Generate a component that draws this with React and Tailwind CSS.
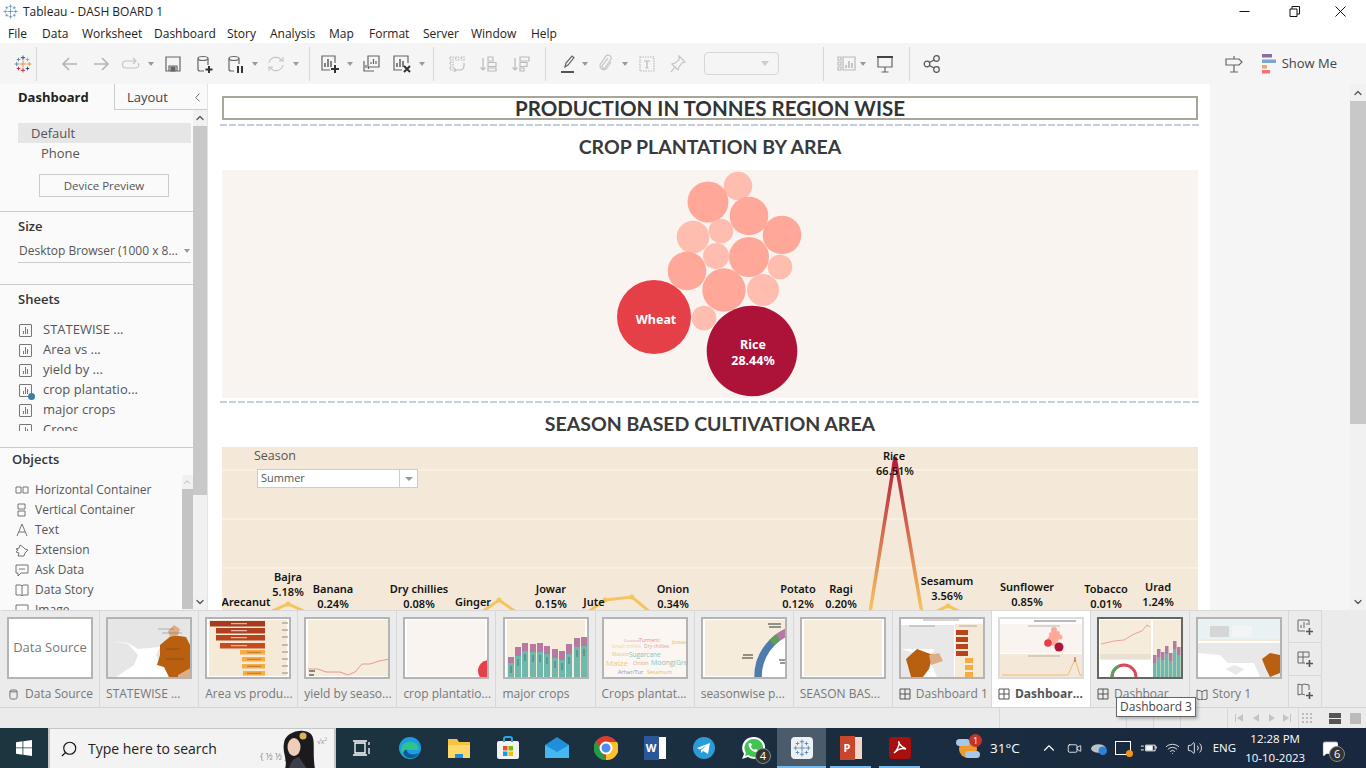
import { ChevronUp, ChevronDown, ChevronLeft, Search, Volume2, Wifi, Video, MessageSquare } from 'lucide-react'

const UI = { fontFamily: '"Open Sans", sans-serif' }

const MENU = [
    ['File', 'w-[34px]'], ['Data', 'w-[40px]'], ['Worksheet', 'w-[72px]'], ['Dashboard', 'w-[73px]'], ['Story', 'w-[43px]'],
    ['Analysis', 'w-[59px]'], ['Map', 'w-[40px]'], ['Format', 'w-[54px]'], ['Server', 'w-[48px]'], ['Window', 'w-[60px]'], ['Help', 'w-[40px]'],
]

const SHEETS = ['STATEWISE ...', 'Area vs ...', 'yield by ...', 'crop plantatio...', 'major crops', 'Crops']

const BUBBLES = [
    [738, 186, 14.3, '#ffbdb0'], [708, 202, 20.5, '#ffa899'], [749, 216, 19.3, '#ffa899'], [782, 235, 19.3, '#ffa899'],
    [693, 237, 16.3, '#ffbdb0'], [721, 231, 12.3, '#ffbdb0'], [749, 257, 20, '#ffa899'], [716, 256, 13, '#ffbdb0'],
    [780, 267, 12.3, '#ffbdb0'], [687, 271, 19.3, '#ffa899'], [724, 290, 21.7, '#ffa899'], [763, 290, 16, '#ffbdb0'],
    [704, 318, 12.3, '#ffbdb0'], [654, 317, 37, '#e53f48'], [752, 351, 45.3, '#ad1238'],
]

// x, y of the first line, then the two lines of the label
const LABELS = [
    [246, 606, 'Arecanut'], [288, 581, 'Bajra', '5.18%'], [333, 593, 'Banana', '0.24%'], [419, 593, 'Dry chillies', '0.08%'],
    [473, 606, 'Ginger'], [551, 593, 'Jowar', '0.15%'], [594, 606, 'Jute'], [673, 593, 'Onion', '0.34%'],
    [798, 593, 'Potato', '0.12%'], [841, 593, 'Ragi', '0.20%'], [947, 585, 'Sesamum', '3.56%'], [1027, 591, 'Sunflower', '0.85%'],
    [1106, 593, 'Tobacco', '0.01%'], [1158, 591, 'Urad', '1.24%'],
]

const MAJOR_BARS = [
    [3, 38, 44], [10, 28, 37], [17, 24, 32], [25, 25, 33], [32, 24, 33], [39, 27, 35], [47, 30, 39], [54, 32, 41], [61, 25, 35], [69, 19, 28], [76, 18, 27],
]

function Caret({ className = '' }) {
    return <span className={`w-0 h-0 border-x-[3px] border-x-transparent border-t-[4px] border-t-[#999] ${className}`} />
}

function Sep({ className = '' }) {
    return <span className={`w-px h-[34px] bg-[#d8d8d8] ${className}`} />
}

function Ico({ className = '', children, stroke = '#666' }) {
    return (
        <svg viewBox="0 0 20 20" fill="none" stroke={stroke} strokeWidth="1.2" className={`w-5 h-5 shrink-0 ${className}`}>
            {children}
        </svg>
    )
}

function TableauMark({ size = 20, mono }) {
    const c = mono ? ['#5b87b2', '#5b87b2', '#5b87b2', '#5b87b2', '#5b87b2'] : ['#e8862c', '#1f447e', '#c72037', '#5b879b', '#eb912b']
    const plus = (x, y, r, col) => <path d={`M${x - r} ${y}H${x + r}M${x} ${y - r}V${y + r}`} stroke={col} strokeWidth="1" />
    return (
        <svg viewBox="0 0 20 20" width={size} height={size} fill="none" className="shrink-0">
            {plus(10, 10, 4, c[0])}{plus(10, 3, 2.4, c[1])}{plus(10, 17, 2.4, c[2])}
            {plus(3, 10, 2.4, c[3])}{plus(17, 10, 2.4, c[4])}
            {plus(5, 5, 2, c[3])}{plus(15, 5, 2, c[4])}{plus(5, 15, 2, c[2])}{plus(15, 15, 2, c[1])}
        </svg>
    )
}

function Toolbar() {
    return (
        <div className="h-[41px] bg-[#f5f5f5] flex items-center shrink-0">
            <div className="w-9 pl-[14px] shrink-0"><TableauMark size={18} /></div>
            <Sep />
            <Ico className="ml-[23px]" stroke="#b5b5b5"><path d="M17 10H3M9 4l-6 6 6 6" strokeWidth="1.6" /></Ico>
            <Ico className="ml-[11px]" stroke="#b5b5b5"><path d="M3 10h14M11 4l6 6-6 6" strokeWidth="1.6" /></Ico>
            <Ico className="ml-[10px]" stroke="#c4c4c4"><path d="M14 7H5a3 3 0 0 0 0 7h10a3 3 0 0 0 2-5M12 4l3 3-3 3" /></Ico>
            <Caret className="ml-[7px]" />
            <Ico className="ml-[9px]"><path d="M3 3h14v14H3zM6 17v-5h8v5" /><path d="M8 13h4v4H8z" fill="#666" /></Ico>
            <Ico className="ml-3"><ellipse cx="8" cy="4.5" rx="5" ry="2" /><path d="M3 4.5V15a2 2 0 0 0 2 2h4M13 4.5V11" /><path d="M14 12v7M10.500 15.500h7" stroke="#333" strokeWidth="2" /></Ico>
            <Ico className="ml-[11px]"><ellipse cx="8" cy="4.5" rx="5" ry="2" /><path d="M3 4.5V15a2 2 0 0 0 2 2h3M13 4.500V10" /><path d="M12 12v7M16 12v7" stroke="#333" strokeWidth="2" /></Ico>
            <Caret className="ml-[6px] border-t-[#555]" />
            <Ico className="ml-2" stroke="#c4c4c4"><path d="M3 9a7 7 0 0 1 13-2M17 11a7 7 0 0 1-13 2M13 7h4V3M7 13H3v4" /></Ico>
            <Caret className="ml-[7px]" />
            <Sep className="ml-[10px]" />
            <Ico className="ml-[10px]"><path d="M15 9V2H2v14h8" /><path d="M5 13V9M8 13V5M11 13V7" strokeWidth="1.6" /><path d="M15 11v8M11 15h8" stroke="#333" strokeWidth="2" /></Ico>
            <Caret className="ml-[7px] border-t-[#555]" />
            <Ico className="ml-2"><path d="M7 2h11v11H7z" /><path d="M3 7v10h10" /><path d="M10 10V8M12.500 10V5M15 10V7M5 14v-3M7.500 15v-2" /></Ico>
            <Ico className="ml-[11px]"><path d="M16 9V2H2v14h8" /><path d="M5 13V9M8 13V5M11 13V7" strokeWidth="1.6" /><path d="M12 12l6 6M18 12l-6 6" stroke="#333" strokeWidth="2" /></Ico>
            <Caret className="ml-[7px] border-t-[#555]" />
            <Sep className="ml-2" />
            <Ico className="ml-[13px]" stroke="#bbb"><path d="M3 3h3v3H3zM8.500 3h3v3h-3zM14 3h3v3h-3zM3 8h3v3H3zM3 13h3v3H3z" strokeDasharray="1.500 1" /><path d="M17 9v3a4 4 0 0 1-4 4H9M7 14l2 2-2 2" /></Ico>
            <Ico className="ml-3" stroke="#bbb"><path d="M4 4v12M1.500 13.500L4 16l2.500-2.500" /><path d="M9 3h5v4H9zM9 8.500h8v4H9zM9 14h8v3H9z" /></Ico>
            <Ico className="ml-3" stroke="#bbb"><path d="M4 4v12M1.500 13.500L4 16l2.500-2.500" /><path d="M9 3h9v4H9zM9 8.500h7v4H9zM9 14h4v3H9z" /></Ico>
            <Sep className="ml-[14px]" />
            <Ico className="ml-3"><path d="M7 13l1-4 6-7 2 1.500-6 7.500z" /><path d="M3 18h13" stroke="#555" strokeWidth="2" /></Ico>
            <Caret className="ml-1 border-t-[#555]" />
            <Ico className="ml-[7px]" stroke="#c4c4c4"><path d="M13 4l-6 8a2 2 0 0 0 3 2l6-9a3 3 0 0 0-5-3l-6 9a4 4 0 0 0 6 4l5-7" /></Ico>
            <Caret className="ml-[7px]" />
            <Ico className="ml-[9px]" stroke="#bbb"><path d="M3 3h14v14H3z" strokeDasharray="1.500 1" /><path d="M7 7h6M10 7v7M8.500 14h3" /></Ico>
            <Ico className="ml-[10px]" stroke="#c4c4c4"><path d="M12 2l6 6-3 1-3 4-1 3-3-3-4 5 4-5-3-3 3-1 4-3z" /></Ico>
            <span className="ml-[17px] w-[75px] h-[23px] rounded-sm border border-[#d6d6d6] flex items-center justify-end pr-[9px]">
                <Caret className="border-t-[#ccc] border-t-[5px] border-x-[4px]" />
            </span>
            <Sep className="ml-[44px]" />
            <Ico className="ml-[13px]" stroke="#bbb"><path d="M1 3h3v3H1zM1 8h3v3H1zM1 13h3v3H1zM6 3h12v13H6z" /><path d="M9 14v-3M12 14V7M15 14v-5" strokeWidth="1.600" /></Ico>
            <Caret className="ml-[3px]" />
            <Ico className="ml-[9px]"><path d="M2 3h16" stroke="#444" strokeWidth="2" /><path d="M3 4v9h14V4M10 13v5M6.500 18h7" /></Ico>
            <Sep className="ml-[14px]" />
            <Ico className="ml-3" stroke="#555"><circle cx="14.500" cy="4.500" r="2.800" /><circle cx="5" cy="10" r="2.800" /><circle cx="14.500" cy="15.500" r="2.800" /><path d="M7.500 8.600l4.500-2.700M7.500 11.400l4.500 2.700" /></Ico>
            <Ico className="ml-auto"><path d="M2 5h13l3 3-3 3H2zM10 2v3M10 11v7M6 18h8" /></Ico>
            <svg viewBox="0 0 16 22" className="w-4 h-[22px] ml-[17px] shrink-0">
                <rect x="1" y="1" width="10" height="3.500" fill="#8a6f9e" />
                <rect x="1" y="6.500" width="14" height="3.500" fill="#7ca6cf" />
                <rect x="1" y="12" width="5" height="3.500" fill="#f3a46b" />
                <rect x="1" y="17" width="8" height="3.500" fill="#f2727f" />
            </svg>
            <span className="ml-[5px] mr-[29px] text-[13px] text-[#444]">Show Me</span>
        </div>
    )
}

function Sidebar() {
    return (
        <aside className="w-[208px] shrink-0 bg-[#fafafa] flex flex-col border-r border-[#e4e4e4]">
            <div className="h-[26px] flex shrink-0">
                <div className="w-[114px] pl-[18px] text-[13px] font-bold text-[#222] leading-[26px]">Dashboard</div>
                <div className="flex-1 border-l border-b border-[#ccc] flex items-center text-[13px] text-[#444] pt-[2px]">
                    <span className="ml-[12px]">Layout</span>
                    <ChevronLeft size={15} strokeWidth={1.2} className="ml-auto mr-[2px]" />
                </div>
            </div>
            <div className="flex flex-1 min-h-0">
                <div className="w-[193px] flex flex-col min-h-0">
                    <div className="h-[102px] border-b border-[#ccc] pt-[13px] shrink-0">
                        <div className="ml-[18px] mr-[2px] h-5 bg-[#e6e6e6] pl-[13px] text-[13px] text-[#555] leading-5">Default</div>
                        <div className="pl-[41px] mt-0 h-5 text-[13px] text-[#555] leading-5">Phone</div>
                        <button className="block ml-[39px] mt-[11px] w-[130px] h-[23px] border border-[#ccc] bg-[#fafafa] text-[11.5px] text-[#555]">Device Preview</button>
                    </div>
                    <div className="h-[73px] border-b border-[#ccc] shrink-0">
                        <div className="pl-[18px] pt-[5px] text-[13px] font-semibold text-[#333] leading-[18px]">Size</div>
                        <div className="ml-[18px] mr-[2px] mt-[5px] h-[23px] border-b border-[#ccc] flex items-center text-[12px] text-[#555] pl-px">
                            <span className="whitespace-nowrap">Desktop Browser (1000 x 8...</span>
                            <Caret className="ml-auto mr-[1px] border-t-[#666]" />
                        </div>
                    </div>
                    <div className="h-[163px] border-b border-[#ccc] overflow-hidden shrink-0">
                        <div className="pl-[18px] pt-[5px] text-[13px] font-semibold text-[#333] leading-[18px]">Sheets</div>
                        <div className="mt-[12px] h-[111px] overflow-hidden">
                            {SHEETS.map((s, i) => (
                                <div key={s} className="h-5 flex items-center pl-[19px] text-[13px] text-[#555]">
                                    <span className="relative shrink-0 w-[13px] h-[13px] border border-[#777] rounded-[1px] flex items-end justify-center gap-px pb-[2px]">
                                        <span className="w-px h-[3px] bg-[#777]" /><span className="w-px h-[7px] bg-[#777]" /><span className="w-px h-[5px] bg-[#777]" />
                                        {i === 3 && <span className="absolute -right-[4px] -bottom-[4px] w-[7px] h-[7px] rounded-full bg-[#3b7ea1]" />}
                                    </span>
                                    <span className="ml-[11px] whitespace-nowrap">{s}</span>
                                </div>
                            ))}
                        </div>
                    </div>
                    <div className="flex-1 min-h-0 overflow-hidden relative">
                        <div className="pl-[12px] pt-[2px] text-[13px] font-semibold text-[#333] leading-[18px]">Objects</div>
                        <div className="mt-[12px] pr-[11px]">
                            {[
                                ['Horizontal Container', <path key="a" d="M1 4h5v6H1zM8 4h5v6H8z" />],
                                ['Vertical Container', <path key="a" d="M3 1h7v5H3zM3 8h7v5H3z" />],
                                ['Text', <path key="a" d="M2 13L7 1l5 12M4 9h6" />],
                                ['Extension', <path key="a" d="M1 6l3-1 1-3 3 2 2 2 3 1-3 3-1 3H3l1-3-3-1 2-2z" />],
                                ['Ask Data', <path key="a" d="M1 2h12v8H6l-3 3v-3H1zM4 6h6" />],
                                ['Data Story', <path key="a" d="M1 2h5l1 1 1-1h5v10H8l-1 1-1-1H1zM7 3v9" />],
                                ['Image', <path key="a" d="M1 2h12v10H1zM3 10l3-3 4 3" />],
                            ].map(([label, d]) => (
                                <div key={label} className="h-5 flex items-center pl-[15px] text-[12px] text-[#555] whitespace-nowrap">
                                    <svg viewBox="0 0 14 14" fill="none" stroke="#666" strokeWidth="0.9" className="w-[14px] h-[14px] shrink-0">{d}</svg>
                                    <span className="ml-[6px]">{label}</span>
                                </div>
                            ))}
                        </div>
                        <div className="absolute right-0 top-[27px] bottom-0 w-[11px] bg-[#f1f1f1]">
                            <ChevronUp size={10} className="text-[#aaa] mt-[2px]" />
                            <div className="mt-[2px] h-[120px] bg-[#c4c4c4]" />
                        </div>
                    </div>
                </div>
                <div className="w-[14px] bg-[#f1f1f1] flex flex-col items-center relative">
                    <ChevronUp size={12} strokeWidth={2.5} className="text-[#555] mt-[2px] shrink-0" />
                    <div className="w-full h-[369px] mt-[2px] bg-[#c8c8c8]" />
                    <ChevronDown size={12} strokeWidth={2.5} className="text-[#555] mt-auto mb-[2px] shrink-0" />
                </div>
            </div>
        </aside>
    )
}

function Dash() {
    return <div className="ml-[12px] mr-[10px] h-[2px] bg-[repeating-linear-gradient(90deg,#c3cfe0_0,#c3cfe0_7px,transparent_7px,transparent_9px)]" />
}

const headingFont = { fontFamily: 'Lato, sans-serif' }

function Canvas() {
    return (
        <div className="w-[1002px] shrink-0 bg-white overflow-hidden">
            <div className="h-[12px]" />
            <div className="ml-[14px] mr-[12px] h-[24px] border-[2px] border-[#a8a698] flex items-center justify-center text-[20.500px] font-bold text-[#333] whitespace-nowrap" style={headingFont}>
                PRODUCTION IN TONNES REGION WISE
            </div>
            <div className="h-[4px]" />
            <Dash />
            <div className="ml-[14px] mr-[12px] h-[44px] pb-[2px] flex items-center justify-center text-[19.500px] font-bold text-[#3a3a3a]" style={headingFont}>CROP PLANTATION BY AREA</div>
            <div className="ml-[14px] mr-[12px] h-[228px] bg-[#f9f4f0]">
                <svg viewBox="222 170 976 228" className="w-full h-full block">
                    {BUBBLES.map(([cx, cy, r, fill]) => <circle key={`${cx}-${cy}`} cx={cx} cy={cy} r={r} fill={fill} />)}
                    <g fill="#fff" fontSize="12.500" fontWeight="700" textAnchor="middle" style={{ fontFamily: '"Noto Sans", sans-serif' }}>
                        <text x="656" y="324">Wheat</text>
                        <text x="753" y="349">Rice</text>
                        <text x="753" y="365">28.44%</text>
                    </g>
                </svg>
            </div>
            <div className="h-[3px]" />
            <Dash />
            <div className="ml-[14px] mr-[12px] h-[44px] pb-[2px] flex items-center justify-center text-[19.500px] font-bold text-[#3a3a3a]" style={headingFont}>SEASON BASED CULTIVATION AREA</div>
            <div className="ml-[14px] mr-[12px] h-[163px] bg-[#f4e9d8] relative overflow-hidden">
                <svg viewBox="222 447 976 163" className="w-full h-full block">
                    <defs>
                        <linearGradient id="line" gradientUnits="userSpaceOnUse" x1="0" y1="457" x2="0" y2="610">
                            <stop offset="0" stopColor="#b3173d" />
                            <stop offset="1" stopColor="#f6c45f" />
                        </linearGradient>
                    </defs>
                    <path d="M222 470H1198M222 519H1198M222 568H1198" stroke="#fbf6ee" strokeWidth="1" />
                    <g fill="none" stroke="url(#line)" strokeWidth="3.500">
                        <path d="M868 625L895 457L924 625" />
                    </g>
                    <g fill="none" stroke="#f6c45f" strokeWidth="3">
                        <path d="M270 612L288 604L306 612M482 612L499 600L516 612M935 612L948 606L961 612M588 612L605 600L632 597L650 612" />
                    </g>
                    <g fill="#f6c45f"><circle cx="288" cy="604" r="2.500" /><circle cx="499" cy="600" r="2.500" /><circle cx="605" cy="600" r="2.500" /><circle cx="632" cy="597" r="2.500" /><circle cx="948" cy="606" r="2.500" /></g>
                    <g fontSize="11" fontWeight="600" fill="#111" textAnchor="middle" style={{ fontFamily: '"Noto Sans", sans-serif' }}>
                        {LABELS.map(([x, y, a, b]) => (
                            <text key={a} x={x} y={y}>
                                <tspan x={x}>{a}</tspan>
                                {b && <tspan x={x} dy="15">{b}</tspan>}
                            </text>
                        ))}
                        <text x="894" y="460">Rice</text>
                        <text x="895" y="475">66.51%</text>
                    </g>
                </svg>
                <div className="absolute left-[32px] top-0 text-[12.500px] text-[#555]">Season</div>
                <div className="absolute left-[35px] top-[22px] w-[161px] h-[19px] bg-white border border-[#ccc] flex items-center text-[11px] text-[#555]">
                    <span className="pl-[3px] flex-1">Summer</span>
                    <span className="w-[18px] h-full border-l border-[#ccc] flex items-center justify-center"><Caret className="border-t-[#555] border-x-[4px]" /></span>
                </div>
            </div>
        </div>
    )
}

function Thumb({ children, active, hover }) {
    return (
        <div className={`w-[86px] h-[62px] mx-auto border-2 overflow-hidden shrink-0 bg-white ${hover ? 'border-[#666]' : active ? 'border-[#dcdcdc]' : 'border-[#b4b4b4]'}`}>
            <svg viewBox="0 0 82 58" className="w-full h-full block">{children}</svg>
        </div>
    )
}

const MAP_ORANGE = '#b85f10'

function TabStrip() {
    const tabs = [
        { label: 'Data Source', icon: 'db', art: <text x="41" y="33" fontSize="13" textAnchor="middle" fill="#777">Data Source</text> },
        { label: 'STATEWISE ...', art: (<>
            <rect width="82" height="58" fill="#e6e6e6" />
            <path d="M4 22L20 25L30 36L26 46L8 58H60V46L52 44L48 36L52 28L30 30L20 24Z" fill="#fff" />
            <path d="M52 26L64 16L78 18L84 30L84 48L72 60L62 60L56 48L49 46L52 36Z" fill={MAP_ORANGE} />
            <path d="M60 12L66 6L72 10L70 16L62 18Z" fill="#dcae86" /><path d="M70 56L84 48V60H70Z" fill="#dcae86" />
            <path d="M50 10L66 10M54 14L74 14M58 30L72 30M58 40L76 40" stroke="#333" strokeWidth="0.500" opacity="0.600" />
        </>) },
        { label: 'Area vs produ...', art: (<>
            <rect x="2" y="1" width="78" height="56" fill="#f5e9d8" />
            {[[3, 55, '#a63a1e', 2], [9, 49, '#b23f1c', 9], [9, 49, '#b8441c', 16], [13, 45, '#c74c1d', 24]].map(([x, w, c, y]) => <rect key={y} x={x} y={y} width={w} height="5.500" fill={c} />)}
            {[[33, 25, 31], [35, 23, 38], [35, 23, 45], [36, 22, 52]].map(([x, w, y]) => <rect key={y} x={x} y={y} width={w} height="4.500" fill="#f7ab42" />)}
            {[2, 9, 16, 24].map((y) => <path key={y} d={`M24 ${y + 2.700}H40`} stroke="#fff" strokeWidth="1" opacity="0.800" />)}
            {[31, 38, 45, 52].map((y) => <path key={y} d={`M40 ${y + 2.300}H54`} stroke="#7a5a2a" strokeWidth="1" opacity="0.600" />)}
            {[3, 10, 17, 25, 32, 39, 46, 53].map((y) => <path key={y} d={`M75 ${y + 1}H81`} stroke="#888" strokeWidth="1" />)}
        </>) },
        { label: 'yield by seaso...', art: (<>
            <rect x="2" y="1" width="80" height="56" fill="#f5ecdc" />
            <path d="M2 50L12 50L20 53L34 53L42 56L49 53L56 45L64 45L73 42L84 40" fill="none" stroke="#e68f88" strokeWidth="0.900" />
            <path d="M3 52H9M3 56H8" stroke="#222" strokeWidth="1.200" />
        </>) },
        { label: 'crop plantatio...', art: (<><rect x="2" y="1" width="78" height="56" fill="#f9f4f0" /><circle cx="84" cy="52" r="11" fill="#e53f48" /></>) },
        { label: 'major crops', art: (<>
            <rect x="2" y="1" width="78" height="56" fill="#f5ecdc" />
            {MAJOR_BARS.map(([x, top, mid]) => (
                <g key={x}>
                    <rect x={x} y={top} width="6" height={mid - top} fill="#b679a2" />
                    <rect x={x} y={mid} width="6" height={58 - mid} fill="#70b8ac" />
                    <path d={`M${x + 3} ${mid + 3}V${mid + 10}`} stroke="#2f4f4a" strokeWidth="1" opacity="0.600" />
                </g>
            ))}
        </>) },
        { label: 'Crops plantat...', art: (<>
            <rect width="82" height="58" fill="#fbf6f2" />
            <g fontSize="5"><text x="20" y="23" fill="#e89a9a" fontSize="4">Coconut</text><text x="35" y="23" fill="#e88a8a" fontSize="5">Turmeric</text><text x="8" y="29" fill="#f0d88c" fontSize="5">Small millets</text><text x="40" y="29" fill="#e0a0a0" fontSize="5">Dry chillies</text><text x="68" y="25" fill="#e8c060" fontSize="6">Jowar</text><text x="8" y="37" fill="#e8c88a">Masoor</text><text x="25" y="38" fill="#8cc4b4" fontSize="6.500">Sugarcane</text></g>
            <text x="2" y="47" fontSize="8" fill="#f0c878">Maize</text><text x="47" y="46" fontSize="7" fill="#8cc4b4">Moong(Gree</text><text x="29" y="46" fontSize="5.500" fill="#e8a888">Onion</text>
            <text x="14" y="55" fontSize="5.500" fill="#7b9cc0">Arhar/Tur</text><text x="43" y="55" fontSize="5.500" fill="#e8c060">Sesamum</text>
        </>) },
        { label: 'seasonwise p...', art: (<>
            <rect x="2" y="1" width="80" height="56" fill="#f5ecdc" />
            <circle cx="104" cy="58" r="49" fill="#fff" stroke="#4f7cad" strokeWidth="7.500" />
            <path d="M69 23.700A49 49 0 0 1 75 18.500" fill="none" stroke="#5ba15b" strokeWidth="7.500" />
            <path d="M75 18.500A49 49 0 0 1 88 11.700" fill="none" stroke="#b679a2" strokeWidth="7.500" />
            <path d="M40 36H50M39 39H50M65 5H78M66 8H78M76 41H82M77 44H82" stroke="#333" strokeWidth="1" />
        </>) },
        { label: 'SEASON BAS...', art: <rect x="2" y="1" width="78" height="56" fill="#f5ecdc" /> },
        { label: 'Dashboard 1', icon: 'grid', art: (<>
            <rect width="82" height="58" fill="#fff" /><rect y="6" width="53" height="52" fill="#e8e8e8" /><rect x="54" y="5" width="28" height="53" fill="#f5e9d8" />
            <path d="M0 30L14 34L6 46L16 58H36L30 44L24 42L34 30H16Z" fill="#fff" />
            <path d="M5 40L16 30L32 36L28 50L22 58H10Z" fill={MAP_ORANGE} />
            <path d="M28 36L38 34L42 42L30 46Z" fill="#dcae86" />
            <path d="M22 1H58M8 7H34M58 7H76" stroke="#999" strokeWidth="0.800" />
            {[11, 18, 25, 32].map((y) => <rect key={y} x="55" y={y} width="12" height="5" fill="#b8441c" />)}{[39, 46, 53].map((y) => <rect key={y} x="64" y={y} width="8" height="5" fill="#f7ab42" />)}
        </>) },
        { label: 'Dashboar...', icon: 'grid', active: true, art: (<>
            <rect width="82" height="58" fill="#fff" /><rect y="5" width="82" height="29" fill="#f9f4f0" /><rect y="35" width="82" height="23" fill="#f4e9d8" />
            <path d="M34 2H76" stroke="#777" strokeWidth="1" /><path d="M28 7H60M28 37H60" stroke="#999" strokeWidth="0.700" />
            {[[54, 11, 3], [57, 15, 3], [52, 16, 3], [55, 20, 3.500], [60, 18, 2.500], [50, 20, 2.500], [54, 24, 3]].map(([x, y, r]) => <circle key={`${x}${y}`} cx={x} cy={y} r={r} fill="#ffa899" />)}
            <circle cx="48" cy="24" r="3.800" fill="#e53f48" /><circle cx="59" cy="28" r="4.500" fill="#ad1238" />
            <path d="M2 56H68L75 40L80 56H82" fill="none" stroke="#eab060" strokeWidth="0.800" />
            <path d="M75 38L75 43" stroke="#c0435a" strokeWidth="1" />
        </>) },
        { label: 'Dashboar', icon: 'grid', hover: true, art: (<>
            <rect width="82" height="58" fill="#fff" /><rect x="1" y="1" width="51" height="40" fill="#f5ecdc" /><rect x="54" y="1" width="28" height="57" fill="#f5ecdc" />
            <rect x="1" y="35" width="51" height="5" fill="#e8e0d0" />
            <path d="M2 25L15 22L25 21L35 15L43 12L48 6L51 8" fill="none" stroke="#e68f88" strokeWidth="0.800" />
            <path d="M13 58A12 12 0 0 1 37 58" fill="none" stroke="#d84a5a" strokeWidth="3" />
            <path d="M13 58A12 12 0 0 1 20 47" fill="none" stroke="#5ba15b" strokeWidth="3" />
            {[54, 58, 62, 66, 70, 74, 78].map((x, i) => {
                const top = [36, 30, 33, 27, 34, 22, 28][i]
                return <g key={x}><rect x={x} y={top} width="3.500" height="8" fill="#b679a2" /><rect x={x} y={top + 8} width="3.500" height={50 - top} fill="#70b8ac" /></g>
            })}
        </>) },
        { label: 'Story 1', icon: 'book', art: (<>
            <rect width="82" height="58" fill="#fff" /><rect width="82" height="20" fill="#e8f2f2" /><rect x="12" y="7" width="19" height="11" fill="#d6d6d6" /><rect x="34" y="7" width="20" height="11" fill="#f1f5f5" />
            <rect y="20" width="82" height="2" fill="#f5e9d8" />
            <path d="M0 24H82V58H62L56 44L30 44L22 36L0 34Z" fill="#e8e8e8" />
            <path d="M28 50L36 46L46 50L38 56Z" fill="#e8e8e8" />
            <path d="M64 40L72 34L82 36V54L72 58L68 50Z" fill={MAP_ORANGE} />
        </>) },
    ]
    return (
        <div className="h-[98px] bg-[#ebebeb] border-b border-[#d4d4d4] flex shrink-0 pl-px">
            {tabs.map((t) => (
                <div key={t.label} className={`w-[99.100px] shrink-0 border-r border-t border-[#d8d8d8] pt-[6px] ${t.active ? 'bg-white' : ''}`}>
                    <Thumb active={t.active} hover={t.hover}>{t.art}</Thumb>
                    <div className={`h-[30px] flex items-center px-[6px] text-[12px] whitespace-nowrap overflow-hidden ${t.active ? 'font-bold text-[#555]' : 'text-[#777]'}`}>
                        {t.icon === 'db' && <svg viewBox="0 0 10 12" fill="none" stroke="#666" className="w-[9px] h-[11px] mr-[7px] ml-[2px] shrink-0"><rect x="1" y="1" width="8" height="10" rx="2" /><path d="M1 3h8" /></svg>}
                        {t.icon === 'grid' && <svg viewBox="0 0 12 12" fill="none" stroke="#555" className="w-[12px] h-[12px] mr-[5px] shrink-0"><path d="M1 1h10v10H1zM6 1v10M1 6h10" /></svg>}
                        {t.icon === 'book' && <svg viewBox="0 0 12 12" fill="none" stroke="#666" className="w-[12px] h-[12px] mr-[4px] shrink-0"><path d="M1 2l4 1 1 1 1-1 4-1v9l-4 1-1-1-1 1-4-1zM6 4v7" /></svg>}
                        <span>{t.label}</span>
                    </div>
                </div>
            ))}
            <div className="w-[33px] shrink-0 flex flex-col border-r border-t border-[#d8d8d8]">
                {[
                    <path key="a" d="M13 7V2H2v11h7M5 10V7M8 10V4M11 7V5" />,
                    <path key="a" d="M13 7V2H2v11h7M2 7h11M7 2v11" />,
                    <path key="a" d="M2 2l4 1 2-1 5 1v5M2 2v11l4-1 3 1M6 3v9" />,
                ].map((d, i) => (
                    <div key={i} className="flex-1 flex items-center justify-center border-b border-[#d8d8d8] last:border-b-0">
                        <svg viewBox="0 0 18 18" fill="none" stroke="#666" className="w-[18px] h-[18px]">{d}<path d="M13.500 10v7M10 13.500h7" stroke="#555" strokeWidth="1.600" /></svg>
                    </div>
                ))}
            </div>
        </div>
    )
}

function BottomStrip() {
    return (
        <div className="h-[20px] bg-[#ebebeb] flex shrink-0">
            <div className="w-[1000px] border-r border-[#d8d8d8]" />
            <div className="w-[127px] border-r border-[#d8d8d8]" />
            <div className="w-[27px] border-r border-[#d8d8d8]" />
            <div className="w-[27px] border-r border-[#d8d8d8]" />
            <div className="w-[47px] border-r border-[#d8d8d8]" />
            <div className="w-[71px] border-r border-[#d8d8d8] flex items-center justify-center">
                <svg viewBox="0 0 60 10" fill="#c4c4c4" className="w-[60px] h-[10px]">
                    <path d="M2 1h1v8H2zM10 1v8L4 5zM26 1v8l-6-4zM36 1v8l6-4zM50 1v8l6-4zM57 1h1v8h-1z" />
                </svg>
            </div>
            <div className="flex-1 flex items-center pl-[2px]">
                <span className="w-[12px] h-[12px] bg-[radial-gradient(#bbb_1.500px,transparent_1.500px)] bg-[length:4px_4px]" />
                <span className="w-[12px] h-[11px] ml-[16px] flex flex-col gap-px">
                    <span className="flex-1 bg-[#555]" /><span className="flex-1 bg-[#555]" />
                </span>
                <span className="w-[11px] h-[11px] ml-[9px] bg-[#bbb]" />
            </div>
        </div>
    )
}

function TaskApp({ children, active }) {
    return (
        <div className={`w-[49px] h-full shrink-0 flex items-center justify-center relative ${active ? 'bg-[#4a5b6b]' : ''}`}>
            {children}
            {active && <span className="absolute bottom-0 inset-x-0 h-[2px] bg-[#76b9ed]" />}
        </div>
    )
}

function Taskbar() {
    return (
        <div className="h-10 bg-gradient-to-r from-[#1c3640] to-[#19283f] flex items-center shrink-0 text-white">
            <div className="w-[48px] flex justify-center">
                <svg viewBox="0 0 16 16" className="w-[16px] h-[16px]" fill="#fff"><path d="M0 2.200L6.500 1.300V7.500H0zM7.300 1.200L16 0V7.500H7.300zM0 8.300H6.500V14.700L0 13.800zM7.300 8.300H16V16L7.300 14.800z" /></svg>
            </div>
            <div className="w-[288px] h-full bg-[#f3f3f3] border-x-2 border-t border-[#c6c6c6] flex items-center relative overflow-hidden">
                <Search size={18} strokeWidth={1.5} className="ml-[10px] text-[#111] -scale-x-100" />
                <span className="ml-[10px] text-[14px] text-[#222] whitespace-nowrap" style={{ fontFamily: '"Open Sans", sans-serif' }}>Type here to search</span>
                <span className="absolute left-[210px] top-[21px] text-[9px] text-[#888]">{'{ ½ ½ }'}</span>
                <span className="absolute left-[267px] top-[8px] text-[7px] text-[#999]">√x²</span>
                <svg viewBox="0 0 40 40" className="absolute left-[229px] top-0 w-10 h-10">
                    <path d="M5 14C6 3 24 -2 32 5C37 11 33 22 36 40H6C9 30 3 24 5 14Z" fill="#1d1a1d" />
                    <ellipse cx="15" cy="18" rx="6.500" ry="9" fill="#f0cdb8" />
                    <circle cx="24" cy="7" r="3.500" fill="#d6b35a" />
                    <path d="M10 40C12 30 17 29 20 28L28 40Z" fill="#3a3f4a" />
                </svg>
            </div>
            <TaskApp><svg viewBox="0 0 18 18" fill="none" stroke="#fff" strokeWidth="1.300" className="w-[18px] h-[18px]"><path d="M3 4h10v10H3zM1 2h14M1 16h14M17 3v3M17 9v6" /></svg></TaskApp>
            <TaskApp><svg viewBox="0 0 24 24" className="w-6 h-6"><circle cx="12" cy="12" r="11" fill="#1b9de2" /><path d="M3 14C3 7 10 5 14 6C19 7 21 11 21 14H9C9 18 15 20 21 17C18 23 11 24 7 21C4 19 3 16 3 14Z" fill="#2dc28e" /><path d="M9 14C9 18 15 20 21 17C18 23 8 25 5 17C6 14 8 13 9 14Z" fill="#0c59a4" /></svg></TaskApp>
            <TaskApp><svg viewBox="0 0 24 22" className="w-6 h-[22px]"><path d="M1 2h9l2 3h11v16H1z" fill="#f5c242" /><path d="M1 8h22v13H1z" fill="#ffd968" /><path d="M8 17h8v4H8z" fill="#1d8fd6" /></svg></TaskApp>
            <TaskApp><svg viewBox="0 0 24 24" className="w-6 h-6"><rect x="1" y="5" width="22" height="18" rx="2" fill="#f2f2f2" /><path d="M8 6V3a2 2 0 0 1 2-2h4a2 2 0 0 1 2 2v3" fill="none" stroke="#2aa6e6" strokeWidth="2" /><rect x="7" y="10" width="4.500" height="4.500" fill="#f25022" /><rect x="12.500" y="10" width="4.500" height="4.500" fill="#7fba00" /><rect x="7" y="15.500" width="4.500" height="4.500" fill="#00a4ef" /><rect x="12.500" y="15.500" width="4.500" height="4.500" fill="#ffb900" /></svg></TaskApp>
            <TaskApp><svg viewBox="0 0 24 24" className="w-6 h-6"><path d="M0 9L12 1L24 9V22H0Z" fill="#1f8fdc" /><path d="M0 9L12 16L24 9V22H0Z" fill="#45b8f2" /></svg></TaskApp>
            <TaskApp><svg viewBox="0 0 24 24" className="w-6 h-6"><circle cx="12" cy="12" r="12" fill="#dc3c30" /><path d="M12 6H23A12 12 0 0 1 12 24Z" fill="#fbc02d" /><path d="M2 5L8 16L12 24A12 12 0 0 1 2 5Z" fill="#279b44" /><circle cx="12" cy="12" r="5.500" fill="#4d8cf0" stroke="#fff" strokeWidth="2" /></svg></TaskApp>
            <TaskApp>
                <div className="w-[22px] h-[24px] relative">
                    <div className="absolute left-[8px] top-[1px] w-[14px] h-[22px] bg-white" />
                    <div className="absolute left-0 top-0 w-[15px] h-[24px] bg-[#2b579a] flex items-center justify-center text-[11px] font-bold">W</div>
                </div>
            </TaskApp>
            <TaskApp><svg viewBox="0 0 22 22" className="w-[22px] h-[22px]"><circle cx="11" cy="11" r="11" fill="#2a9dd8" /><path d="M4 11L17 6L15 17L10 14L8 16L8 13L14 8L7 12.500Z" fill="#fff" /></svg></TaskApp>
            <TaskApp>
                <svg viewBox="0 0 24 24" className="w-6 h-6"><path d="M12 1A11 11 0 0 0 3 18L1 23L7 21A11 11 0 1 0 12 1Z" fill="#fff" /><path d="M12 3A9 9 0 0 0 5 17L4 20L7.500 19A9 9 0 1 0 12 3Z" fill="#43c354" /><path d="M8 7C6 10 11 17 16 16L17 14L14 13L13 14C11 13 10 11 10 10L11 9L10 7Z" fill="#fff" /></svg>
                <span className="absolute left-[27px] top-[20px] w-4 h-4 rounded-full bg-[#333] border border-[#888] text-[11px] leading-[14px] text-center" style={UI}>4</span>
            </TaskApp>
            <TaskApp active>
                <div className="w-[22px] h-[22px] bg-[#eef1f3] rounded-sm flex items-center justify-center"><TableauMark size={18} mono /></div>
            </TaskApp>
            <TaskApp>
                <div className="w-[22px] h-[24px] relative">
                    <div className="absolute left-[8px] top-[1px] w-[14px] h-[22px] bg-[#f6d5c8]" />
                    <div className="absolute left-0 top-0 w-[15px] h-[24px] bg-[#c8462b] flex items-center justify-center text-[11px] font-bold">P</div>
                </div>
                <span className="absolute bottom-0 left-[4px] right-[4px] h-[2px] bg-[#76b9ed]" />
            </TaskApp>
            <TaskApp>
                <div className="w-[22px] h-[22px] rounded-[3px] bg-[#a80f0f] flex items-center justify-center">
                    <svg viewBox="0 0 16 16" fill="none" stroke="#fff" strokeWidth="1.400" className="w-4 h-4"><path d="M2 13C5 11 8 4 7 2C6 1 7 6 14 9C11 8 6 9 2 13Z" /></svg>
                </div>
                <span className="absolute bottom-0 left-[4px] right-[4px] h-[2px] bg-[#76b9ed]" />
            </TaskApp>
            <div className="ml-[32px] w-[26px] h-[24px] relative shrink-0">
                <div className="absolute left-[3px] top-[4px] w-[18px] h-[18px] rounded-full bg-[#ef9a2d]" />
                <div className="absolute left-0 top-[3px] w-[14px] h-[7px] rounded-full bg-[#a7c8e8]" />
                <div className="absolute left-[9px] top-[15px] w-[15px] h-[7px] rounded-full bg-[#a7c8e8]" />
                <span className="absolute left-[13px] -top-[2px] w-[13px] h-[13px] rounded-full bg-[#c4342c] text-[9px] leading-[13px] text-center" style={UI}>1</span>
            </div>
            <span className="ml-[8px] text-[13.500px]" style={UI}>31°C</span>
            <ChevronUp size={18} strokeWidth={1.500} className="ml-[20px]" />
            <Video size={15} strokeWidth={1.300} className="ml-[9px]" />
            <svg viewBox="0 0 16 12" className="ml-[8px] w-[17px] h-[13px]"><ellipse cx="8" cy="6" rx="7" ry="4" fill="#b9c4cc" /><circle cx="12" cy="8" r="4" fill="#2b82d4" /></svg>
            <div className="ml-[8px] w-4 h-[14px] border border-white relative"><span className="absolute -right-[3px] -bottom-[3px] w-[7px] h-[7px] rounded-full bg-[#f2941f]" /></div>
            <svg viewBox="0 0 18 10" fill="none" stroke="#fff" className="ml-[9px] w-[17px] h-[10px]"><path d="M6 2h10v6H6zM1 3h3M1 7h3M16 4h2v2" /><path d="M7 3h6v4H7z" fill="#fff" /></svg>
            <Wifi size={15} strokeWidth={1.300} className="ml-[8px]" />
            <Volume2 size={16} strokeWidth={1.300} className="ml-[7px]" />
            <span className="ml-[10px] text-[11.500px]" style={UI}>ENG</span>
            <div className="ml-[8px] w-[62px] text-center text-[11.500px] leading-[19px] whitespace-nowrap" style={UI}>
                <div>12:28 PM</div>
                <div>10-10-2023</div>
            </div>
            <div className="ml-[16px] relative w-[18px] h-[16px]">
                <MessageSquare size={17} fill="#fff" strokeWidth={1} />
                <span className="absolute left-[7px] top-[6px] w-4 h-4 rounded-full bg-[#333] border border-[#888] text-[11px] leading-[14px] text-center" style={UI}>6</span>
            </div>
        </div>
    )
}

export default function App() {
    return (
        <div className="w-[1366px] h-[768px] overflow-hidden flex flex-col bg-white relative" style={UI}>
            <div className="h-[22px] flex items-center shrink-0 text-[12px] text-[#222] pt-px">
                <div className="ml-[3px]"><TableauMark size={15} mono /></div>
                <span className="ml-[5px]">Tableau - DASH BOARD 1</span>
                <svg viewBox="0 0 10 2" className="w-[11px] h-[2px] ml-auto" fill="#111"><rect width="10" height="1" /></svg>
                <svg viewBox="0 0 11 11" fill="none" stroke="#111" className="w-[11px] h-[11px] ml-[39px]"><path d="M1 3h7v7.500H1zM3 3V.5h7.500V8H8" /></svg>
                <svg viewBox="0 0 11 11" fill="none" stroke="#111" className="w-[11px] h-[11px] ml-[35px] mr-[20px]"><path d="M.5.5l10 10M10.500.5l-10 10" /></svg>
            </div>
            <div className="h-[21px] flex items-center shrink-0 pl-[8px] pt-[2px] text-[12px] text-[#222]">
                {MENU.map(([m, w]) => <span key={m} className={w}>{m}</span>)}
            </div>
            <Toolbar />
            <div className="flex h-[526px] shrink-0">
                <Sidebar />
                <Canvas />
                <div className="flex-1 bg-[#f5f5f5]" />
                <div className="w-4 bg-[#f1f1f1] flex flex-col items-center">
                    <ChevronUp size={12} strokeWidth={2.500} className="text-[#555] mt-[3px] shrink-0" />
                    <div className="w-full h-[323px] bg-[#c8c8c8] mt-[2px]" />
                    <ChevronDown size={12} strokeWidth={2.500} className="text-[#555] mt-auto mb-[2px] shrink-0" />
                </div>
            </div>
            <TabStrip />
            <BottomStrip />
            <Taskbar />
            <div className="absolute left-[1116px] top-[697px] w-[80px] h-[20px] bg-white border border-[#666] shadow-[2px_2px_3px_rgba(0,0,0,0.25)] text-[12px] leading-[18px] text-center text-[#444]">Dashboard 3</div>
        </div>
    )
}
